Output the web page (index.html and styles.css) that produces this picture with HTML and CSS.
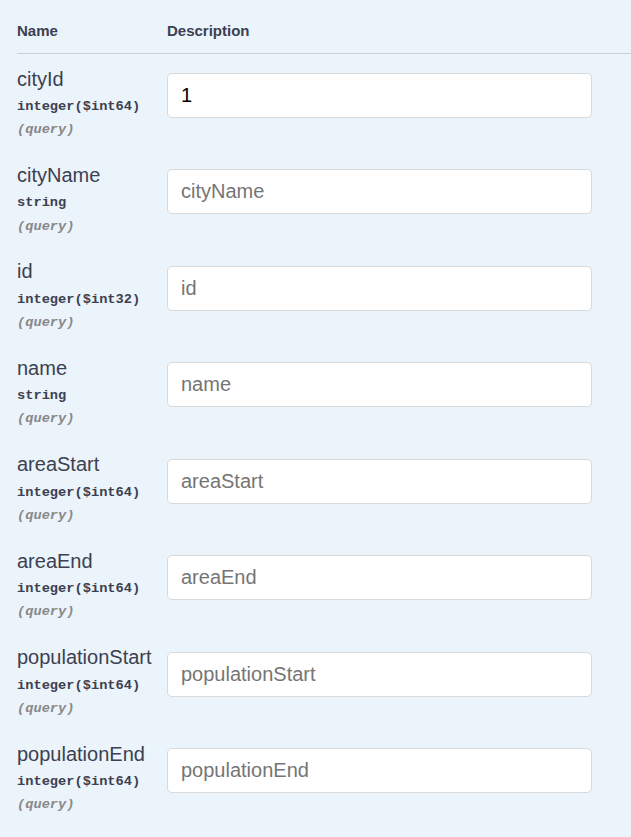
FILE: index.html
```html
<!DOCTYPE html>
<html>
<head>
<meta charset="utf-8">
<link rel="stylesheet" href="styles.css">
</head>
<body>
<div class="params">
  <div class="head">
    <div class="col-name">Name</div>
    <div class="col-desc">Description</div>
  </div>
  <div class="row">
    <div class="col-name"><div class="pname">cityId</div><div class="ptype">integer<span class="fmt">($int64)</span></div><div class="pin">(query)</div></div>
    <div class="col-desc"><input class="field" type="text" value="1" placeholder="cityId"></div>
  </div>
  <div class="row">
    <div class="col-name"><div class="pname">cityName</div><div class="ptype">string</div><div class="pin">(query)</div></div>
    <div class="col-desc"><input class="field" type="text" placeholder="cityName"></div>
  </div>
  <div class="row">
    <div class="col-name"><div class="pname">id</div><div class="ptype">integer<span class="fmt">($int32)</span></div><div class="pin">(query)</div></div>
    <div class="col-desc"><input class="field" type="text" placeholder="id"></div>
  </div>
  <div class="row">
    <div class="col-name"><div class="pname">name</div><div class="ptype">string</div><div class="pin">(query)</div></div>
    <div class="col-desc"><input class="field" type="text" placeholder="name"></div>
  </div>
  <div class="row">
    <div class="col-name"><div class="pname">areaStart</div><div class="ptype">integer<span class="fmt">($int64)</span></div><div class="pin">(query)</div></div>
    <div class="col-desc"><input class="field" type="text" placeholder="areaStart"></div>
  </div>
  <div class="row">
    <div class="col-name"><div class="pname">areaEnd</div><div class="ptype">integer<span class="fmt">($int64)</span></div><div class="pin">(query)</div></div>
    <div class="col-desc"><input class="field" type="text" placeholder="areaEnd"></div>
  </div>
  <div class="row">
    <div class="col-name"><div class="pname">populationStart</div><div class="ptype">integer<span class="fmt">($int64)</span></div><div class="pin">(query)</div></div>
    <div class="col-desc"><input class="field" type="text" placeholder="populationStart"></div>
  </div>
  <div class="row">
    <div class="col-name"><div class="pname">populationEnd</div><div class="ptype">integer<span class="fmt">($int64)</span></div><div class="pin">(query)</div></div>
    <div class="col-desc"><input class="field" type="text" placeholder="populationEnd"></div>
  </div>
</div>
</body>
</html>
```

FILE: styles.css
```css
html, body {
  margin: 0;
  padding: 0;
  background: #ebf3fb;
}
body {
  font-family: "Liberation Sans", Arial, sans-serif;
  color: #3b4151;
  overflow: hidden;
}
.params {
  margin-left: 17px;
}
.head {
  display: flex;
  padding: 22px 0 14px;
  border-bottom: 1px solid #c9d0d9;
  font-size: 15px;
  font-weight: bold;
  line-height: 17px;
}
.col-name {
  width: 150px;
  flex: none;
}
.col-desc {
  flex: 1;
}
.row {
  display: flex;
  padding: 12.55px 0 12.43px;
}
.pname {
  font-size: 20px;
  line-height: 25px;
}
.ptype {
  font-family: "Liberation Mono", "DejaVu Sans Mono", monospace;
  font-weight: bold;
  font-size: 13.7px;
  line-height: 17px;
  padding: 6.25px 0;
}
.pin {
  font-family: "Liberation Mono", "DejaVu Sans Mono", monospace;
  font-style: italic;
  font-weight: bold;
  font-size: 13.7px;
  line-height: 17px;
  color: #888;
}
.field {
  display: block;
  box-sizing: border-box;
  margin: 6.25px 0 0;
  width: 425px;
  height: 45px;
  padding: 0 13px;
  border: 1px solid #d9d9d9;
  border-radius: 5px;
  background: #fff;
  font-family: "Liberation Sans", Arial, sans-serif;
  font-size: 20px;
  color: #000;
  outline: none;
}
.field::placeholder {
  color: #757575;
}
```
